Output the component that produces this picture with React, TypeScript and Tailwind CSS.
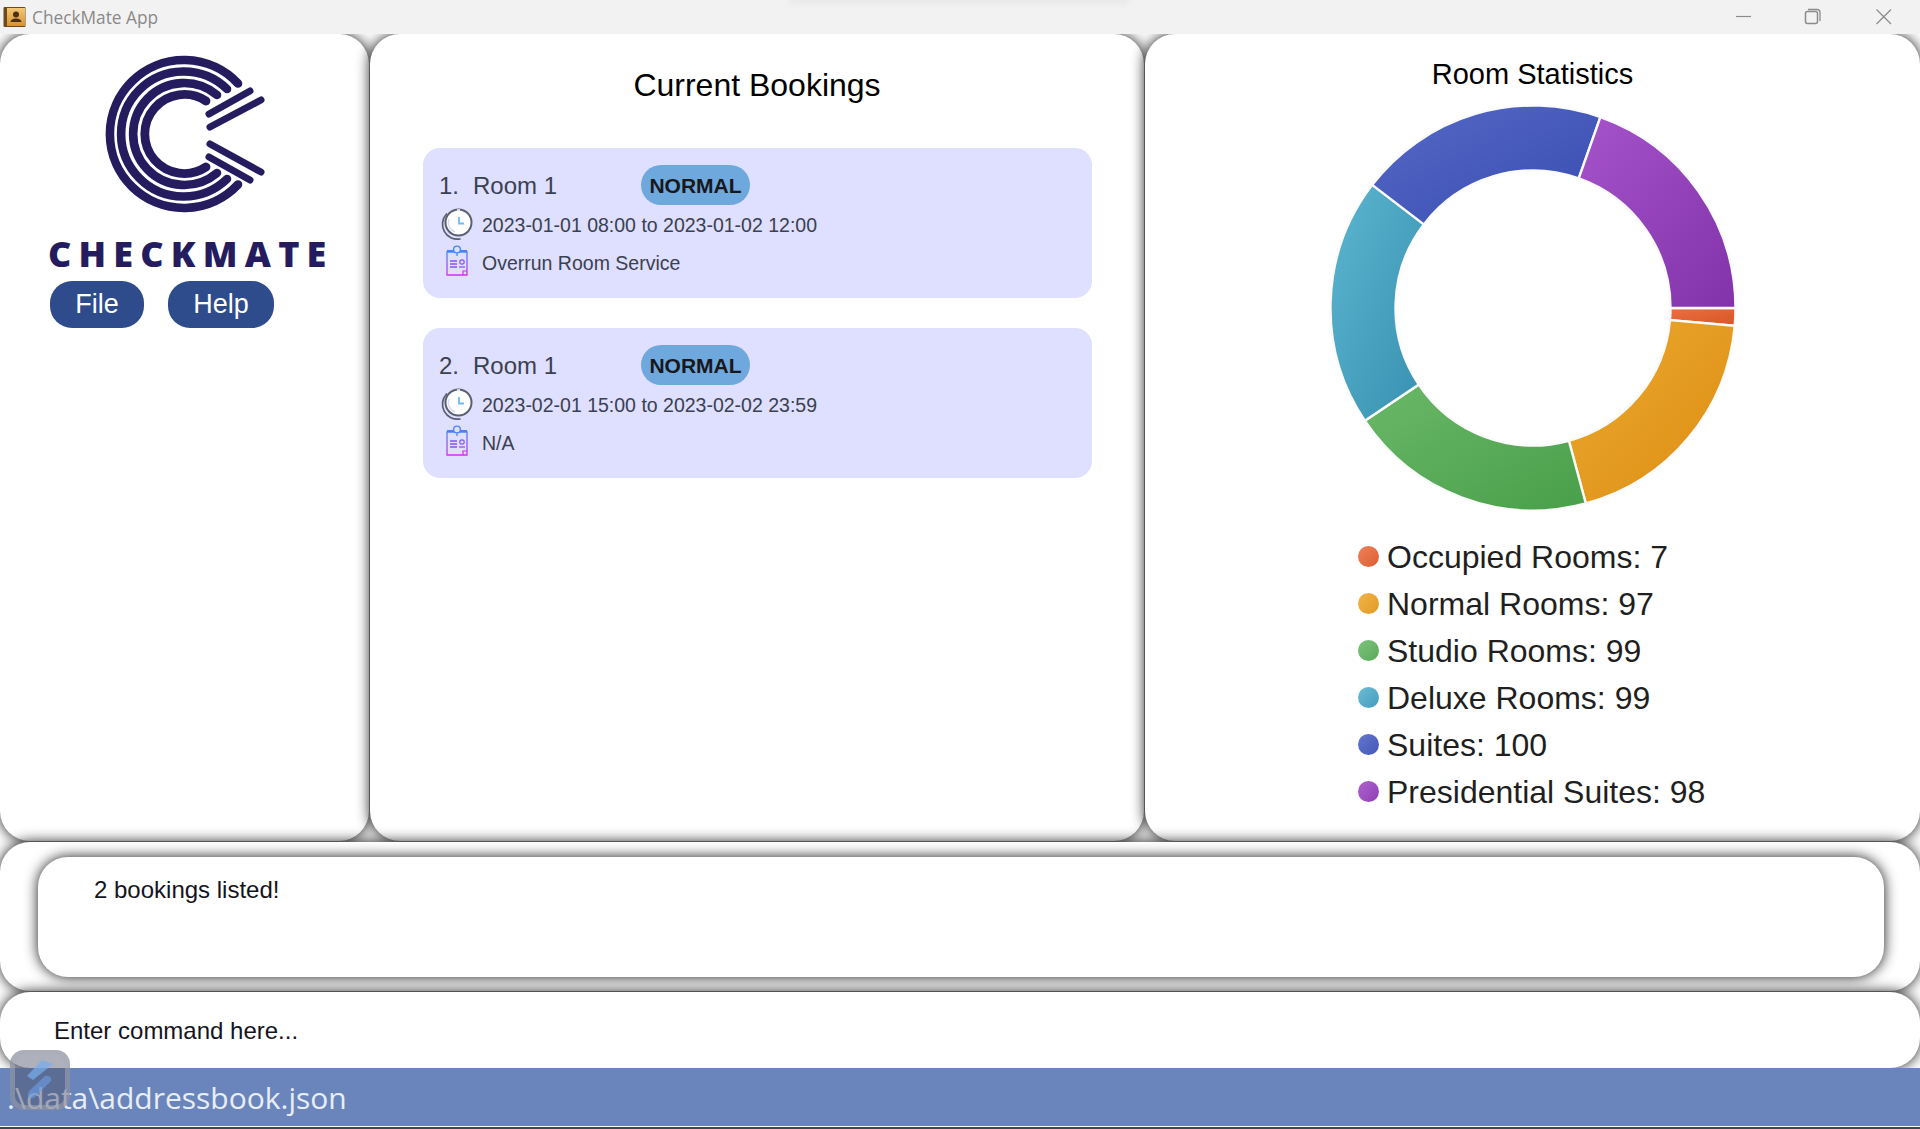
import React from "react";

const slices = [
  { id: "occ", value: 7, from: "#ea6f42", to: "#d95526" },
  { id: "nor", value: 97, from: "#eba92f", to: "#dd8d12" },
  { id: "stu", value: 99, from: "#6ab868", to: "#499f4a" },
  { id: "del", value: 99, from: "#5cb6d0", to: "#3790b0" },
  { id: "sui", value: 100, from: "#5769c8", to: "#364cae" },
  { id: "pre", value: 98, from: "#a553ca", to: "#8233aa" },
];

const legend = [
  { label: "Occupied Rooms: 7", cls: "bg-gradient-to-br from-[#ee8059] to-[#dc5f31]" },
  { label: "Normal Rooms: 97", cls: "bg-gradient-to-br from-[#f2b54a] to-[#e09a1f]" },
  { label: "Studio Rooms: 99", cls: "bg-gradient-to-br from-[#7cc47a] to-[#5aa95b]" },
  { label: "Deluxe Rooms: 99", cls: "bg-gradient-to-br from-[#6cbcd4] to-[#429cbc]" },
  { label: "Suites: 100", cls: "bg-gradient-to-br from-[#6375cf] to-[#4458b6]" },
  { label: "Presidential Suites: 98", cls: "bg-gradient-to-br from-[#ad62ce] to-[#8f40b4]" },
];

function Donut() {
  const c = 204;
  const R = 202.5;
  const r = 137.5;
  const total = slices.reduce((s, x) => s + x.value, 0);
  let a = 0;
  const pt = (rad: number, ang: number) =>
    `${(c + rad * Math.cos(ang)).toFixed(2)} ${(c + rad * Math.sin(ang)).toFixed(2)}`;
  return (
    <svg width="408" height="408" viewBox="0 0 408 408">
      <defs>
        {slices.map((s) => (
          <linearGradient key={s.id} id={`g-${s.id}`} x1="0" y1="0" x2="1" y2="1">
            <stop offset="0" stopColor={s.from} />
            <stop offset="1" stopColor={s.to} />
          </linearGradient>
        ))}
      </defs>
      {slices.map((s) => {
        const start = a;
        const end = a + (s.value / total) * Math.PI * 2;
        a = end;
        const large = end - start > Math.PI ? 1 : 0;
        const d = `M ${pt(R, start)} A ${R} ${R} 0 ${large} 1 ${pt(R, end)} L ${pt(r, end)} A ${r} ${r} 0 ${large} 0 ${pt(r, start)} Z`;
        return <path key={s.id} d={d} fill={`url(#g-${s.id})`} stroke="#fbfbfb" strokeWidth="2.4" />;
      })}
    </svg>
  );
}

function Logo() {
  const cx = 84;
  const cy = 83;
  const arc = (rad: number, ex: number, ey: number) => {
    return `M ${cx + ex} ${cy + ey} A ${rad} ${rad} 0 1 0 ${cx + ex} ${cy - ey}`;
  };
  return (
    <svg width="170" height="166" viewBox="0 0 170 166" fill="none" stroke="#241c5e" strokeLinecap="round">
      <path d={arc(74, 54, -50.5)} strokeWidth="8.6" />
      <path d={arc(62.5, 43, -45)} strokeWidth="8.6" />
      <path d={arc(51, 33, -39)} strokeWidth="8.6" />
      <path d={arc(39.5, 22, -33)} strokeWidth="8.8" />
      <path d="M109 63 L150 40" strokeWidth="7" />
      <path d="M110 76 L161 49" strokeWidth="7" />
      <path d="M110 93 L161 121" strokeWidth="7" />
      <path d="M109 106 L150 129" strokeWidth="7" />
    </svg>
  );
}

function ClockIcon() {
  return (
    <svg width="32" height="34" viewBox="0 0 32 34" fill="none">
      <path d="M5.5 7 A15 15 0 0 0 19 32" stroke="#5b6070" strokeWidth="1.7" strokeLinecap="round" />
      <circle cx="17.5" cy="15.5" r="14" fill="#5b6070" />
      <circle cx="17.5" cy="15.5" r="12" fill="#ffffff" />
      <path d="M8 12 A10 10 0 0 0 14 25" stroke="#d9dcf0" strokeWidth="1.4" />
      <path d="M18 10 V16.5 H23" stroke="#6cbcf8" strokeWidth="1.8" />
      <path d="M16 3 H19" stroke="#ffffff" strokeWidth="1.4" />
    </svg>
  );
}

function ClipIcon({ id }: { id: string }) {
  return (
    <svg width="24" height="32" viewBox="0 0 24 32" fill="none">
      <defs>
        <linearGradient id={id} x1="0" y1="0" x2="0" y2="1">
          <stop offset="0" stopColor="#4f86f7" />
          <stop offset="1" stopColor="#d330f0" />
        </linearGradient>
      </defs>
      <path d="M2 7 H22 V30 H2 Z" stroke={`url(#${id})`} strokeWidth="1.3" />
      <path d="M2 6 H22" stroke="#4f7ef5" strokeWidth="2" />
      <circle cx="12" cy="4.5" r="3.4" fill="#dfdfff" stroke="#4f86f7" strokeWidth="1.4" />
      <path d="M12 8 V11" stroke="#4f86f7" strokeWidth="1.3" />
      <path d="M5 16 H12 M5 19 H12 M5 22 H12" stroke="#8a55ee" strokeWidth="1.3" />
      <circle cx="17" cy="17" r="2.2" stroke="#8a55ee" strokeWidth="1.2" />
      <path d="M14 22 H20" stroke="#9a50ee" strokeWidth="1.3" />
      <path d="M18 30 V26 H22" stroke="#d330f0" strokeWidth="1.2" />
    </svg>
  );
}

function BookingCard({ n, range, note }: { n: number; range: string; note: string }) {
  return (
    <div className="w-[669px] h-[150px] rounded-[17px] bg-[#dfdfff] pt-[17px] text-[#3a4150]">
      <div className="flex items-center h-[40px]">
        <div className="w-[36px] text-right text-[24px] pt-[2px]">{n}.</div>
        <div className="ml-[14px] w-[168px] text-[24px] pt-[2px]">Room 1</div>
        <div className="w-[109px] h-[40px] rounded-[20px] bg-[#6fa8dc] flex items-center justify-center pt-[2px] text-[21px] font-bold text-[#17171c]">
          NORMAL
        </div>
      </div>
      <div className="flex items-center h-[34px] mt-[2px]">
        <div className="ml-[18px] w-[41px] flex">
          <ClockIcon />
        </div>
        <div className="text-[19.5px] whitespace-nowrap pt-[3px]">{range}</div>
      </div>
      <div className="flex items-center h-[32px] mt-[4px]">
        <div className="ml-[22px] w-[37px] flex">
          <ClipIcon id={`clip-${n}`} />
        </div>
        <div className="text-[19.5px] whitespace-nowrap pt-[5px]">{note}</div>
      </div>
    </div>
  );
}

export default function App() {
  const panelShadow = "shadow-[0_0_14px_rgba(0,0,0,0.9)]";
  return (
    <div className="relative w-[1920px] h-[1129px] overflow-hidden bg-white flex flex-col font-['Liberation_Sans',Arial,sans-serif] text-black">
      <div className="relative z-10 h-[34px] shrink-0 bg-[#f2f2f2] flex items-center">
        <svg className="ml-[3px]" width="23" height="22" viewBox="0 0 23 22">
          <defs>
            <linearGradient id="book" x1="0" y1="0" x2="0" y2="1">
              <stop offset="0" stopColor="#f3c877" />
              <stop offset="1" stopColor="#d8912f" />
            </linearGradient>
          </defs>
          <rect x="0.5" y="1" width="22" height="20" rx="1" fill="#6b4a22" />
          <rect x="4" y="2" width="18" height="18" fill="url(#book)" />
          <circle cx="13" cy="8.5" r="3" fill="#4c3013" />
          <path d="M7.5 16 Q8 12.5 13 12.5 Q18 12.5 18.5 16 Z" fill="#4c3013" />
        </svg>
        <span className="ml-[6px] text-[17.3px] pt-[1px] text-[#8a8a8a] font-['Open_Sans',sans-serif]">CheckMate App</span>
        <div className="absolute left-[790px] top-[-4px] w-[340px] h-[7px] rounded-full bg-[#e6e6e6] blur-[3px]" />
        <svg className="absolute left-[1730px] top-0" width="170" height="34" viewBox="0 0 170 34" fill="none" stroke="#8b8b8b" strokeWidth="1.2">
          <path d="M6 16.5 H21" />
          <rect x="75.5" y="11.5" width="12" height="12" rx="2" strokeWidth="1.5" />
          <path d="M78 9.5 H87 Q90 9.5 90 12.5 V21" strokeWidth="1.3" />
          <path d="M146.5 9.5 L161 24 M161 9.5 L146.5 24" />
        </svg>
      </div>

      <div className="flex h-[807px] shrink-0 gap-px">
        <div className={`w-[369px] shrink-0 bg-white rounded-[30px] ${panelShadow} flex flex-col`}>
          <div className="ml-[100px] mt-[17px]">
            <Logo />
          </div>
          <div className="ml-[48px] mt-[18px] h-[38px] leading-[38px] text-[36px] font-extrabold tracking-[7.2px] text-[#241c5e] font-['Open_Sans',sans-serif] whitespace-nowrap">
            CHECKMATE
          </div>
          <div className="flex ml-[50px] mt-[8px] gap-[24px]">
            <div className="w-[94px] h-[47px] rounded-[22px] bg-[#2e4c8c] text-white text-[27px] flex items-center justify-center">File</div>
            <div className="w-[106px] h-[47px] rounded-[22px] bg-[#2e4c8c] text-white text-[27px] flex items-center justify-center">Help</div>
          </div>
        </div>

        <div className={`w-[774px] shrink-0 bg-white rounded-[30px] ${panelShadow} flex flex-col items-center`}>
          <div className="mt-[31px] h-[40px] leading-[40px] text-[32px]">Current Bookings</div>
          <div className="self-start ml-[53px] mt-[43px] flex flex-col gap-[30px]">
            <BookingCard n={1} range="2023-01-01 08:00 to 2023-01-02 12:00" note="Overrun Room Service" />
            <BookingCard n={2} range="2023-02-01 15:00 to 2023-02-02 23:59" note="N/A" />
          </div>
        </div>

        <div className={`flex-1 bg-white rounded-[30px] ${panelShadow} flex flex-col items-center`}>
          <div className="mt-[22px] h-[36px] leading-[36px] text-[29px]">Room Statistics</div>
          <div className="mt-[12px]">
            <Donut />
          </div>
          <div className="self-start ml-[213px] mt-[21px] flex flex-col">
            {legend.map((l) => (
              <div key={l.label} className="h-[47px] flex items-center">
                <div className={`w-[21px] h-[21px] rounded-full ${l.cls}`} />
                <div className="ml-[8px] text-[32px] text-[#1f1f1f] whitespace-nowrap">{l.label}</div>
              </div>
            ))}
          </div>
        </div>
      </div>

      <div className={`mt-px h-[149px] shrink-0 bg-white rounded-[30px] ${panelShadow} pt-[15px] pl-[38px] pr-[36px]`}>
        <div className={`h-[120px] bg-white rounded-[30px] ${panelShadow} pl-[56px] pt-[18px] text-[24px] leading-[30px] text-[#14141e]`}>
          2 bookings listed!
        </div>
      </div>

      <div className={`mt-px h-[76px] shrink-0 bg-white rounded-[30px] ${panelShadow} pl-[54px] pt-[23px] text-[24px] leading-[32px] text-[#14141e]`}>
        Enter command here...
      </div>

      <div className="relative z-10 h-[58px] shrink-0 bg-[#6a85bb] pl-[7px] pt-[1px] text-[30px] leading-[58px] text-[#e9edf6] font-['Open_Sans',sans-serif]">
        .\data\addressbook.json
      </div>
      <div className="relative z-10 h-px shrink-0 bg-white" />
      <div className="relative z-10 flex-1 bg-[#3d4750]" />

      <div className="absolute z-20 left-[10px] top-[1050px] w-[60px] h-[60px] rounded-[14px] border-[5px] border-[#a9acb8]/50 bg-[#4c5068]/45 flex items-center justify-center">
        <svg width="30" height="42" viewBox="0 0 30 42" className="blur-[0.5px]">
          <path d="M17 1 L28 5 L8 21 L2 17 Z" fill="#78aef0" fillOpacity="0.7" />
          <path d="M20 17 Q24 16 26 19 Q27 22 24 24 L10 38 Q6 41 3 37 Q2 34 5 31 Z" fill="#6a9ee8" fillOpacity="0.6" />
        </svg>
      </div>
    </div>
  );
}
